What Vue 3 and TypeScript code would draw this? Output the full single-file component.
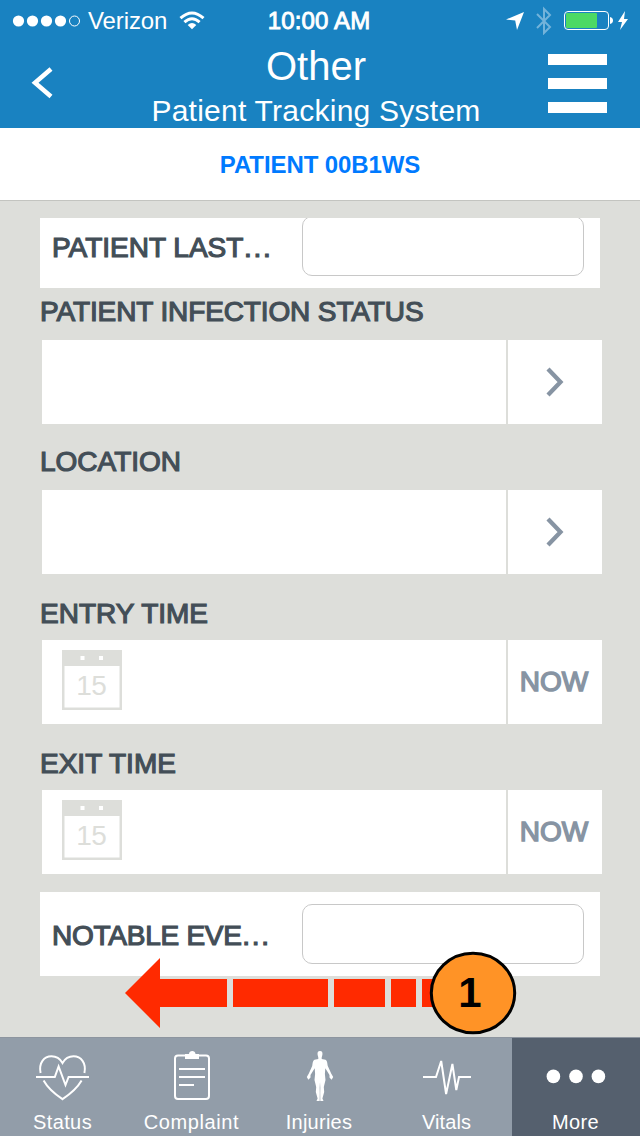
<script setup lang="ts">
interface Field {
  id: string
  label: string
  kind: 'pick' | 'time'
}

interface Tab {
  id: string
  label: string
  active?: boolean
}

const fields: Field[] = [
  { id: 'infection', label: 'PATIENT INFECTION STATUS', kind: 'pick' },
  { id: 'location', label: 'LOCATION', kind: 'pick' },
  { id: 'entry', label: 'ENTRY TIME', kind: 'time' },
  { id: 'exit', label: 'EXIT TIME', kind: 'time' },
]

const tabs: Tab[] = [
  { id: 'status', label: 'Status' },
  { id: 'complaint', label: 'Complaint' },
  { id: 'injuries', label: 'Injuries' },
  { id: 'vitals', label: 'Vitals' },
  { id: 'more', label: 'More', active: true },
]
</script>

<template>
  <div class="screen">
    <header class="header">
      <div class="status-bar">
        <div class="carrier">
          <svg class="signal" width="70" height="14" viewBox="0 0 70 14">
            <circle cx="6.5" cy="7" r="5.6" /><circle cx="20.5" cy="7" r="5.6" />
            <circle cx="34.5" cy="7" r="5.6" /><circle cx="48.5" cy="7" r="5.6" />
            <circle class="empty" cx="62.5" cy="7" r="5" />
          </svg>
          <span class="carrier-name">Verizon</span>
          <svg class="wifi" width="26" height="20" viewBox="0 0 26 20">
            <path class="arc" d="M1.5 7.2Q13 -3.1 24.5 7.2M5.4 11.2Q13 4.3 20.6 11.2" />
            <path d="M8.7 13.9Q13 10.1 17.3 13.9L13 18.3Z" />
          </svg>
        </div>
        <span class="clock">10:00 AM</span>
        <svg class="indicators" width="126" height="30" viewBox="0 0 126 30">
          <path fill="#fff" d="M0 14.5L18 7L11 25L9.2 15.6Z" />
          <path fill="none" stroke="#73b3da" stroke-width="2" d="M31 9L44 22L38 28V4L44 10L31 23" />
          <rect x="58.5" y="6.5" width="44" height="18" rx="3.5" fill="none" stroke="#fff" />
          <rect x="60" y="8" width="31" height="15" rx="1" fill="#4cd964" />
          <path fill="#fff" d="M104 12Q107 12.7 107 15.5Q107 18.3 104 19Z" />
          <path fill="#fff" d="M119 6L112 17H116L114 25L122 14H118Z" />
        </svg>
      </div>
      <div class="nav">
        <svg class="back" width="24" height="32" viewBox="0 0 24 32">
          <path d="M22 2L6 15.7L22 29.5" />
        </svg>
        <div class="titles">
          <h1>Other</h1>
          <h2>Patient Tracking System</h2>
        </div>
        <div class="menu"><i /><i /><i /></div>
      </div>
    </header>

    <div class="patient">PATIENT 00B1WS</div>

    <main class="form">
      <div class="card first">
        <span class="card-label">PATIENT LAST<span class="dots">...</span></span>
        <span class="input" />
      </div>

      <section v-for="f in fields" :key="f.id" class="field">
        <div class="label" :class="f.id">{{ f.label }}</div>
        <div class="row">
          <div class="value">
            <svg v-if="f.kind === 'time'" width="60" height="60" viewBox="0 0 60 60">
              <rect width="60" height="60" fill="#dddeda" />
              <rect x="2.5" y="16" width="55" height="41.5" fill="#fff" />
              <rect x="18.5" y="6" width="4" height="4" fill="#fff" />
              <rect x="37" y="6" width="4" height="4" fill="#fff" />
              <text x="29.3" y="44.5" text-anchor="middle" class="day">15</text>
            </svg>
          </div>
          <div class="action">
            <svg v-if="f.kind === 'pick'" width="20" height="30" viewBox="0 0 20 30">
              <path d="M3 2L15.5 15L3 28" fill="none" stroke="#8794a3" stroke-width="4.3" />
            </svg>
            <span v-else class="now">NOW</span>
          </div>
        </div>
      </section>

      <div class="card last">
        <span class="card-label">NOTABLE EVE<span class="dots">...</span></span>
        <span class="input" />
      </div>
    </main>

    <nav class="tabs">
      <div v-for="t in tabs" :key="t.id" class="tab" :class="[t.id, { active: t.active }]">
        <svg class="icon" width="64" height="56" viewBox="0 0 64 56">
          <g v-if="t.id === 'status'" class="line">
            <path d="M8.6 27C6.5 17 12 10.3 19.5 10.3C25 10.3 28.5 13.5 30.5 17C32.5 13.5 36 10.3 41.5 10.3C49 10.3 54.5 17 52.4 27" />
            <path d="M4 31H22.8L26.6 20.5L33.5 39L36.6 31H57" />
            <path d="M11.6 34.6C16 42.5 23 48.3 30.5 53.2C38 48.3 45 42.5 49.6 34.6" />
          </g>
          <g v-else-if="t.id === 'complaint'">
            <rect x="15" y="9.5" width="34" height="43.6" rx="3" class="line" />
            <path d="M19 23H45M19 31H45M19 39H34" class="line" />
            <path fill="#fff" d="M25 8H29C29 4 35.5 4 35.5 8H39V13H25Z" />
          </g>
          <path
            v-else-if="t.id === 'injuries'"
            fill="#fff"
            d="M32 5C34.2 5 34.7 6.6 34.4 8.8L33.7 11.5V13L37.5 13.8C39.3 14.5 39.3 18 39.8 20L43.3 27.7L45.2 31L43.6 33.7L41.5 31.5V29L37.3 22.3L36.9 28L37.5 34L35.8 41L36.2 46L34.4 52.5L35.5 55H32.3L32.2 47L32.3 42L32 36L31.7 42L31.8 47L31.7 55H28.5L29.6 52.5L27.8 46L28.2 41L26.5 34L27.1 28L26.7 22.3L22.5 29V31.5L20.4 33.7L18.8 31L20.7 27.7L24.2 20C24.7 18 24.7 14.5 26.5 13.8L30.3 13V11.5L29.6 8.8C29.3 6.6 29.8 5 32 5Z"
          />
          <path v-else-if="t.id === 'vitals'" class="line" d="M7 31H20L25.2 15L30.1 48L36.4 18L40.3 44L43 31H55" />
          <g v-else fill="#fff">
            <circle cx="9.4" cy="30.4" r="6.8" /><circle cx="32" cy="30.4" r="6.8" /><circle cx="54.4" cy="30.4" r="6.8" />
          </g>
        </svg>
        <span class="tab-label">{{ t.label }}</span>
      </div>
    </nav>

    <svg class="swipe" width="392" height="84" viewBox="0 0 392 84">
      <g fill="#ff2a00">
        <path d="M0 42L35 7V28H102V56H35V77Z" />
        <rect x="108" y="28" width="95" height="28" />
        <rect x="209" y="28" width="51" height="28" />
        <rect x="266" y="28" width="25" height="28" />
        <rect x="297" y="28" width="20" height="28" />
      </g>
      <ellipse cx="348" cy="42" rx="41.7" ry="39.7" fill="#ff9326" stroke="#000" stroke-width="3" />
      <text x="345" y="56" text-anchor="middle" class="step">1</text>
    </svg>
  </div>
</template>

<style>
body {
  margin: 0;
}
</style>

<style scoped>
.screen {
  position: relative;
  display: flex;
  flex-direction: column;
  width: 640px;
  height: 1136px;
  overflow: hidden;
  background: #dddeda;
  font-family: "Liberation Sans", Arial, sans-serif;
}
.header {
  height: 128px;
  background: #1982c1;
  color: #fff;
}
.status-bar {
  display: grid;
  grid-template-columns: 1fr auto 1fr;
  align-items: center;
  height: 40px;
  padding: 0 8px 0 12px;
}
.carrier {
  display: flex;
  align-items: center;
}
.signal {
  margin-top: 1px;
  fill: #fff;
}
.signal .empty {
  fill: none;
  stroke: #fff;
}
.carrier-name {
  margin: 2px 0 0 6px;
  font-size: 24px;
  line-height: 38px;
  letter-spacing: -0.1px;
}
.wifi {
  margin: 1px 0 0 12px;
  fill: #fff;
}
.wifi .arc {
  fill: none;
  stroke: #fff;
  stroke-width: 3;
}
.clock {
  margin: 2px 3px 0 -3px;
  font-size: 24px;
  line-height: 38px;
  letter-spacing: 0.15px;
  -webkit-text-stroke: 0.9px #fff;
}
.indicators {
  justify-self: end;
  margin-top: -1px;
}
.nav {
  display: flex;
  align-items: flex-start;
  justify-content: space-between;
  height: 88px;
  padding: 0 33px 0 29px;
}
.back {
  margin-top: 27px;
  fill: none;
  stroke: #fff;
  stroke-width: 4.5;
}
.titles {
  margin-left: 31px;
  text-align: center;
}
h1,
h2 {
  margin: 0;
  font-weight: 400;
}
h1 {
  font-size: 40px;
  line-height: 52px;
}
h2 {
  padding-top: 1px;
  font-size: 30px;
  line-height: 36px;
  letter-spacing: 0.25px;
}
.menu {
  display: grid;
  gap: 13px;
  margin-top: 14px;
}
.menu i {
  width: 59px;
  height: 11px;
  background: #fff;
}
.patient {
  box-sizing: border-box;
  height: 73px;
  border-bottom: 1px solid #c3c4c0;
  background: #fff;
  color: #007aff;
  font-size: 24px;
  font-weight: 700;
  line-height: 74px;
  letter-spacing: -0.1px;
  text-align: center;
}
.form {
  flex: 1;
  padding: 17px 38px 0 40px;
}
.card {
  display: flex;
  justify-content: space-between;
  align-items: center;
  box-sizing: border-box;
  width: 560px;
  padding: 0 16px 0 12px;
  background: #fff;
  overflow: hidden;
}
.card.first {
  height: 70px;
  padding-bottom: 14px;
}
.card.last {
  height: 84px;
  margin-top: 18px;
}
.card-label,
.label {
  color: #434e57;
  font-size: 28px;
  -webkit-text-stroke: 1.2px #434e57;
}
.card-label {
  padding-top: 3px;
}
.card.last .card-label {
  letter-spacing: -0.25px;
}
.card .dots {
  margin-left: 0.5px;
  letter-spacing: 1.8px;
}
.input {
  flex: none;
  box-sizing: border-box;
  width: 282px;
  height: 60px;
  border: 1px solid #c8c8c8;
  border-radius: 10px;
}
.label {
  height: 66px;
  line-height: 76px;
}
.label.infection {
  height: 52px;
  line-height: 48px;
  letter-spacing: -0.12px;
}
.label.entry,
.label.exit {
  line-height: 80px;
}
.row {
  display: grid;
  grid-template-columns: 464px 94px;
  gap: 2px;
  height: 84px;
  margin-left: 2px;
}
.value,
.action {
  display: flex;
  align-items: center;
  background: #fff;
}
.value {
  padding-left: 20px;
  padding-bottom: 4px;
}
.action {
  justify-content: center;
}
.day {
  fill: #dddeda;
  font-size: 28px;
  letter-spacing: -0.5px;
}
.now {
  margin-right: 2px;
  color: #8794a3;
  font-size: 28px;
  -webkit-text-stroke: 1.4px #8794a3;
}
.tabs {
  display: grid;
  grid-template-columns: repeat(5, 128px);
  box-sizing: border-box;
  height: 99px;
  border-top: 1px solid #8d959f;
  background: #929da9;
}
.tab {
  display: flex;
  flex-direction: column;
  align-items: center;
  color: #fff;
}
.tab.active {
  background: #55606e;
}
.icon {
  margin-top: 8px;
}
.line {
  fill: none;
  stroke: #fff;
  stroke-width: 2;
}
.tab-label {
  margin: 8px 1px 0 0;
  font-size: 20px;
  line-height: 24px;
  letter-spacing: 0.4px;
}
.status .tab-label {
  margin-right: 3px;
}
.vitals .tab-label {
  margin-right: 3px;
  letter-spacing: 0.1px;
}
.injuries .tab-label {
  margin-right: 2px;
  letter-spacing: 0.25px;
}
.complaint .tab-label {
  letter-spacing: 0.6px;
}
.swipe {
  position: absolute;
  left: 125px;
  top: 951px;
}
.step {
  font-size: 42px;
  font-weight: 700;
}
</style>
